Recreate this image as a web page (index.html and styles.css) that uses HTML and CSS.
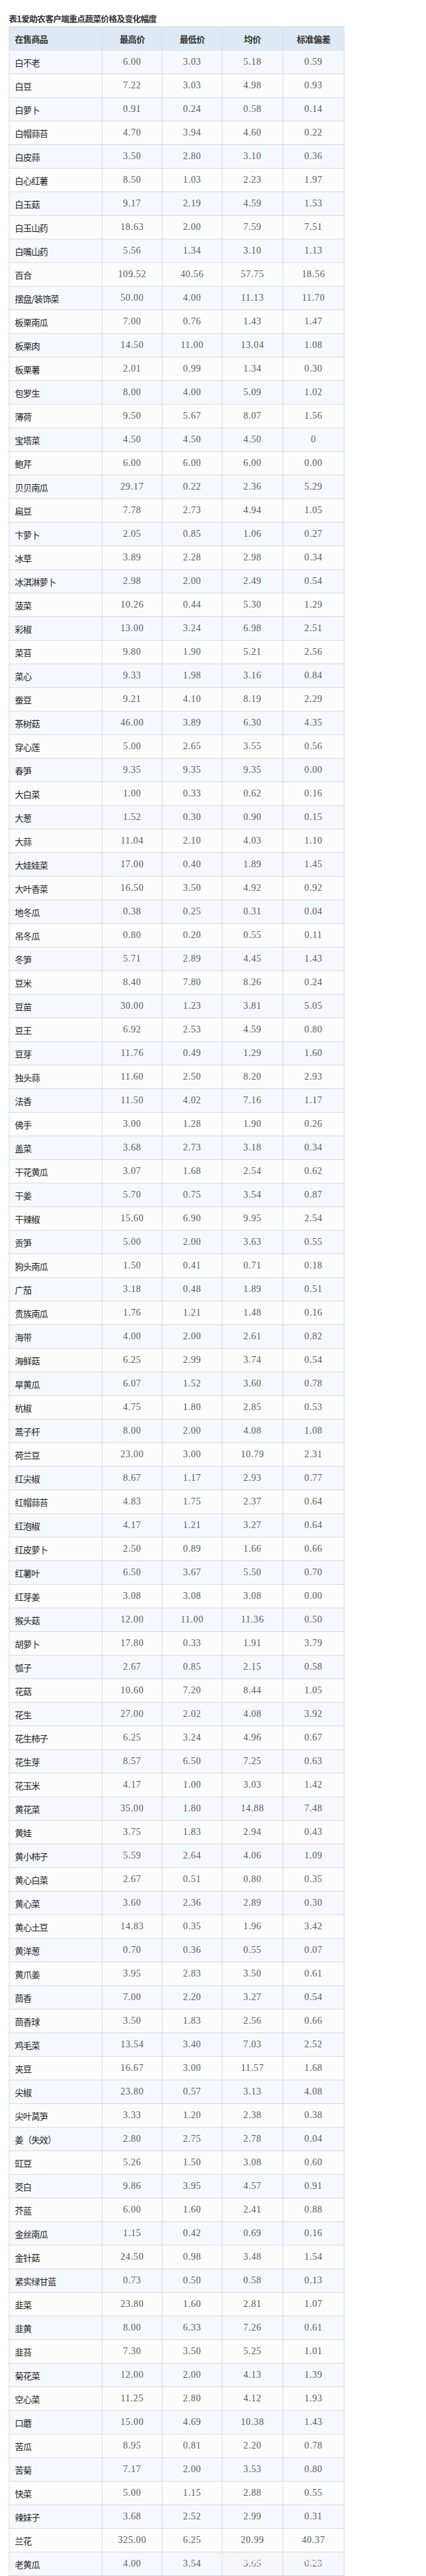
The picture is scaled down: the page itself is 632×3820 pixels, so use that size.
FILE: index.html
```html
<!DOCTYPE html>
<html lang="zh-CN">
<head>
<meta charset="utf-8">
<title>表1爱助农客户端重点蔬菜价格及变化幅度</title>
<link rel="stylesheet" href="styles.css">
</head>
<body>
<div class="page">
  <h3 class="caption">表1爱助农客户端重点蔬菜价格及变化幅度</h3>
  <table class="price-table">
    <colgroup>
      <col class="c-name"><col class="c-num"><col class="c-num"><col class="c-num2"><col class="c-num3">
    </colgroup>
    <thead>
      <tr><th class="name">在售商品</th><th>最高价</th><th>最低价</th><th>均价</th><th>标准偏差</th></tr>
    </thead>
    <tbody>
      <tr><td class="name">白不老</td><td>6.00</td><td>3.03</td><td>5.18</td><td>0.59</td></tr>
      <tr><td class="name">白豆</td><td>7.22</td><td>3.03</td><td>4.98</td><td>0.93</td></tr>
      <tr><td class="name">白萝卜</td><td>0.91</td><td>0.24</td><td>0.58</td><td>0.14</td></tr>
      <tr><td class="name">白帽蒜苔</td><td>4.70</td><td>3.94</td><td>4.60</td><td>0.22</td></tr>
      <tr><td class="name">白皮蒜</td><td>3.50</td><td>2.80</td><td>3.10</td><td>0.36</td></tr>
      <tr><td class="name">白心红薯</td><td>8.50</td><td>1.03</td><td>2.23</td><td>1.97</td></tr>
      <tr><td class="name">白玉菇</td><td>9.17</td><td>2.19</td><td>4.59</td><td>1.53</td></tr>
      <tr><td class="name">白玉山药</td><td>18.63</td><td>2.00</td><td>7.59</td><td>7.51</td></tr>
      <tr><td class="name">白嘴山药</td><td>5.56</td><td>1.34</td><td>3.10</td><td>1.13</td></tr>
      <tr><td class="name">百合</td><td>109.52</td><td>40.56</td><td>57.75</td><td>18.56</td></tr>
      <tr><td class="name">摆盘/装饰菜</td><td>50.00</td><td>4.00</td><td>11.13</td><td>11.70</td></tr>
      <tr><td class="name">板栗南瓜</td><td>7.00</td><td>0.76</td><td>1.43</td><td>1.47</td></tr>
      <tr><td class="name">板栗肉</td><td>14.50</td><td>11.00</td><td>13.04</td><td>1.08</td></tr>
      <tr><td class="name">板栗薯</td><td>2.01</td><td>0.99</td><td>1.34</td><td>0.30</td></tr>
      <tr><td class="name">包罗生</td><td>8.00</td><td>4.00</td><td>5.09</td><td>1.02</td></tr>
      <tr><td class="name">薄荷</td><td>9.50</td><td>5.67</td><td>8.07</td><td>1.56</td></tr>
      <tr><td class="name">宝塔菜</td><td>4.50</td><td>4.50</td><td>4.50</td><td>0</td></tr>
      <tr><td class="name">鲍芹</td><td>6.00</td><td>6.00</td><td>6.00</td><td>0.00</td></tr>
      <tr><td class="name">贝贝南瓜</td><td>29.17</td><td>0.22</td><td>2.36</td><td>5.29</td></tr>
      <tr><td class="name">扁豆</td><td>7.78</td><td>2.73</td><td>4.94</td><td>1.05</td></tr>
      <tr><td class="name">卞萝卜</td><td>2.05</td><td>0.85</td><td>1.06</td><td>0.27</td></tr>
      <tr><td class="name">冰草</td><td>3.89</td><td>2.28</td><td>2.98</td><td>0.34</td></tr>
      <tr><td class="name">冰淇淋萝卜</td><td>2.98</td><td>2.00</td><td>2.49</td><td>0.54</td></tr>
      <tr><td class="name">菠菜</td><td>10.26</td><td>0.44</td><td>5.30</td><td>1.29</td></tr>
      <tr><td class="name">彩椒</td><td>13.00</td><td>3.24</td><td>6.98</td><td>2.51</td></tr>
      <tr><td class="name">菜苔</td><td>9.80</td><td>1.90</td><td>5.21</td><td>2.56</td></tr>
      <tr><td class="name">菜心</td><td>9.33</td><td>1.98</td><td>3.16</td><td>0.84</td></tr>
      <tr><td class="name">蚕豆</td><td>9.21</td><td>4.10</td><td>8.19</td><td>2.29</td></tr>
      <tr><td class="name">茶树菇</td><td>46.00</td><td>3.89</td><td>6.30</td><td>4.35</td></tr>
      <tr><td class="name">穿心莲</td><td>5.00</td><td>2.65</td><td>3.55</td><td>0.56</td></tr>
      <tr><td class="name">春笋</td><td>9.35</td><td>9.35</td><td>9.35</td><td>0.00</td></tr>
      <tr><td class="name">大白菜</td><td>1.00</td><td>0.33</td><td>0.62</td><td>0.16</td></tr>
      <tr><td class="name">大葱</td><td>1.52</td><td>0.30</td><td>0.90</td><td>0.15</td></tr>
      <tr><td class="name">大蒜</td><td>11.04</td><td>2.10</td><td>4.03</td><td>1.10</td></tr>
      <tr><td class="name">大娃娃菜</td><td>17.00</td><td>0.40</td><td>1.89</td><td>1.45</td></tr>
      <tr><td class="name">大叶香菜</td><td>16.50</td><td>3.50</td><td>4.92</td><td>0.92</td></tr>
      <tr><td class="name">地冬瓜</td><td>0.38</td><td>0.25</td><td>0.31</td><td>0.04</td></tr>
      <tr><td class="name">吊冬瓜</td><td>0.80</td><td>0.20</td><td>0.55</td><td>0.11</td></tr>
      <tr><td class="name">冬笋</td><td>5.71</td><td>2.89</td><td>4.45</td><td>1.43</td></tr>
      <tr><td class="name">豆米</td><td>8.40</td><td>7.80</td><td>8.26</td><td>0.24</td></tr>
      <tr><td class="name">豆苗</td><td>30.00</td><td>1.23</td><td>3.81</td><td>5.05</td></tr>
      <tr><td class="name">豆王</td><td>6.92</td><td>2.53</td><td>4.59</td><td>0.80</td></tr>
      <tr><td class="name">豆芽</td><td>11.76</td><td>0.49</td><td>1.29</td><td>1.60</td></tr>
      <tr><td class="name">独头蒜</td><td>11.60</td><td>2.50</td><td>8.20</td><td>2.93</td></tr>
      <tr><td class="name">法香</td><td>11.50</td><td>4.02</td><td>7.16</td><td>1.17</td></tr>
      <tr><td class="name">佛手</td><td>3.00</td><td>1.28</td><td>1.90</td><td>0.26</td></tr>
      <tr><td class="name">盖菜</td><td>3.68</td><td>2.73</td><td>3.18</td><td>0.34</td></tr>
      <tr><td class="name">干花黄瓜</td><td>3.07</td><td>1.68</td><td>2.54</td><td>0.62</td></tr>
      <tr><td class="name">干姜</td><td>5.70</td><td>0.75</td><td>3.54</td><td>0.87</td></tr>
      <tr><td class="name">干辣椒</td><td>15.60</td><td>6.90</td><td>9.95</td><td>2.54</td></tr>
      <tr><td class="name">贡笋</td><td>5.00</td><td>2.00</td><td>3.63</td><td>0.55</td></tr>
      <tr><td class="name">狗头南瓜</td><td>1.50</td><td>0.41</td><td>0.71</td><td>0.18</td></tr>
      <tr><td class="name">广茄</td><td>3.18</td><td>0.48</td><td>1.89</td><td>0.51</td></tr>
      <tr><td class="name">贵族南瓜</td><td>1.76</td><td>1.21</td><td>1.48</td><td>0.16</td></tr>
      <tr><td class="name">海带</td><td>4.00</td><td>2.00</td><td>2.61</td><td>0.82</td></tr>
      <tr><td class="name">海鲜菇</td><td>6.25</td><td>2.99</td><td>3.74</td><td>0.54</td></tr>
      <tr><td class="name">旱黄瓜</td><td>6.07</td><td>1.52</td><td>3.60</td><td>0.78</td></tr>
      <tr><td class="name">杭椒</td><td>4.75</td><td>1.80</td><td>2.85</td><td>0.53</td></tr>
      <tr><td class="name">蒿子杆</td><td>8.00</td><td>2.00</td><td>4.08</td><td>1.08</td></tr>
      <tr><td class="name">荷兰豆</td><td>23.00</td><td>3.00</td><td>10.79</td><td>2.31</td></tr>
      <tr><td class="name">红尖椒</td><td>8.67</td><td>1.17</td><td>2.93</td><td>0.77</td></tr>
      <tr><td class="name">红帽蒜苔</td><td>4.83</td><td>1.75</td><td>2.37</td><td>0.64</td></tr>
      <tr><td class="name">红泡椒</td><td>4.17</td><td>1.21</td><td>3.27</td><td>0.64</td></tr>
      <tr><td class="name">红皮萝卜</td><td>2.50</td><td>0.89</td><td>1.66</td><td>0.66</td></tr>
      <tr><td class="name">红薯叶</td><td>6.50</td><td>3.67</td><td>5.50</td><td>0.70</td></tr>
      <tr><td class="name">红芽姜</td><td>3.08</td><td>3.08</td><td>3.08</td><td>0.00</td></tr>
      <tr><td class="name">猴头菇</td><td>12.00</td><td>11.00</td><td>11.36</td><td>0.50</td></tr>
      <tr><td class="name">胡萝卜</td><td>17.80</td><td>0.33</td><td>1.91</td><td>3.79</td></tr>
      <tr><td class="name">瓠子</td><td>2.67</td><td>0.85</td><td>2.15</td><td>0.58</td></tr>
      <tr><td class="name">花菇</td><td>10.60</td><td>7.20</td><td>8.44</td><td>1.05</td></tr>
      <tr><td class="name">花生</td><td>27.00</td><td>2.02</td><td>4.08</td><td>3.92</td></tr>
      <tr><td class="name">花生柿子</td><td>6.25</td><td>3.24</td><td>4.96</td><td>0.67</td></tr>
      <tr><td class="name">花生芽</td><td>8.57</td><td>6.50</td><td>7.25</td><td>0.63</td></tr>
      <tr><td class="name">花玉米</td><td>4.17</td><td>1.00</td><td>3.03</td><td>1.42</td></tr>
      <tr><td class="name">黄花菜</td><td>35.00</td><td>1.80</td><td>14.88</td><td>7.48</td></tr>
      <tr><td class="name">黄娃</td><td>3.75</td><td>1.83</td><td>2.94</td><td>0.43</td></tr>
      <tr><td class="name">黄小柿子</td><td>5.59</td><td>2.64</td><td>4.06</td><td>1.09</td></tr>
      <tr><td class="name">黄心白菜</td><td>2.67</td><td>0.51</td><td>0.80</td><td>0.35</td></tr>
      <tr><td class="name">黄心菜</td><td>3.60</td><td>2.36</td><td>2.89</td><td>0.30</td></tr>
      <tr><td class="name">黄心土豆</td><td>14.83</td><td>0.35</td><td>1.96</td><td>3.42</td></tr>
      <tr><td class="name">黄洋葱</td><td>0.70</td><td>0.36</td><td>0.55</td><td>0.07</td></tr>
      <tr><td class="name">黄爪姜</td><td>3.95</td><td>2.83</td><td>3.50</td><td>0.61</td></tr>
      <tr><td class="name">茴香</td><td>7.00</td><td>2.20</td><td>3.27</td><td>0.54</td></tr>
      <tr><td class="name">茴香球</td><td>3.50</td><td>1.83</td><td>2.56</td><td>0.66</td></tr>
      <tr><td class="name">鸡毛菜</td><td>13.54</td><td>3.40</td><td>7.03</td><td>2.52</td></tr>
      <tr><td class="name">夹豆</td><td>16.67</td><td>3.00</td><td>11.57</td><td>1.68</td></tr>
      <tr><td class="name">尖椒</td><td>23.80</td><td>0.57</td><td>3.13</td><td>4.08</td></tr>
      <tr><td class="name">尖叶莴笋</td><td>3.33</td><td>1.20</td><td>2.38</td><td>0.38</td></tr>
      <tr><td class="name">姜（失效）</td><td>2.80</td><td>2.75</td><td>2.78</td><td>0.04</td></tr>
      <tr><td class="name">豇豆</td><td>5.26</td><td>1.50</td><td>3.08</td><td>0.60</td></tr>
      <tr><td class="name">茭白</td><td>9.86</td><td>3.95</td><td>4.57</td><td>0.91</td></tr>
      <tr><td class="name">芥蓝</td><td>6.00</td><td>1.60</td><td>2.41</td><td>0.88</td></tr>
      <tr><td class="name">金丝南瓜</td><td>1.15</td><td>0.42</td><td>0.69</td><td>0.16</td></tr>
      <tr><td class="name">金针菇</td><td>24.50</td><td>0.98</td><td>3.48</td><td>1.54</td></tr>
      <tr><td class="name">紧实绿甘蓝</td><td>0.73</td><td>0.50</td><td>0.58</td><td>0.13</td></tr>
      <tr><td class="name">韭菜</td><td>23.80</td><td>1.60</td><td>2.81</td><td>1.07</td></tr>
      <tr><td class="name">韭黄</td><td>8.00</td><td>6.33</td><td>7.26</td><td>0.61</td></tr>
      <tr><td class="name">韭苔</td><td>7.30</td><td>3.50</td><td>5.25</td><td>1.01</td></tr>
      <tr><td class="name">菊花菜</td><td>12.00</td><td>2.00</td><td>4.13</td><td>1.39</td></tr>
      <tr><td class="name">空心菜</td><td>11.25</td><td>2.80</td><td>4.12</td><td>1.93</td></tr>
      <tr><td class="name">口蘑</td><td>15.00</td><td>4.69</td><td>10.38</td><td>1.43</td></tr>
      <tr><td class="name">苦瓜</td><td>8.95</td><td>0.81</td><td>2.20</td><td>0.78</td></tr>
      <tr><td class="name">苦菊</td><td>7.17</td><td>2.00</td><td>3.53</td><td>0.80</td></tr>
      <tr><td class="name">快菜</td><td>5.00</td><td>1.15</td><td>2.88</td><td>0.55</td></tr>
      <tr><td class="name">辣妹子</td><td>3.68</td><td>2.52</td><td>2.99</td><td>0.31</td></tr>
      <tr><td class="name">兰花</td><td>325.00</td><td>6.25</td><td>20.99</td><td>40.37</td></tr>
      <tr><td class="name">老黄瓜</td><td>4.00</td><td>3.54</td><td>3.65</td><td>0.23</td></tr>
    </tbody>
  </table>
  <div class="watermark">构站网(www.goz.cn)</div>
</div>
</body>
</html>
```
FILE: styles.css
```css
html, body {
  margin: 0;
  padding: 0;
  background: #ffffff;
}

.page {
  position: relative;
  padding: 19px 0 0 13px;
  width: 498px;
}

.caption {
  margin: 0 0 2px 0;
  height: 18px;
  line-height: 18px;
  font-family: "Noto Sans CJK SC", "Noto Sans", sans-serif;
  font-size: 12.5px;
  font-weight: 700;
  letter-spacing: -0.7px;
  color: #333333;
}

.price-table {
  border-collapse: collapse;
  table-layout: fixed;
  width: 498px;
  border: 1px solid #d3d8de;
}

.c-name { width: 138px; }
.c-num { width: 89px; }
.c-num2 { width: 90px; }
.c-num3 { width: 91px; }

.price-table tr {
  height: 35px;
}

.price-table th,
.price-table td {
  border: 1px solid #d9dde2;
  padding: 0;
  text-align: center;
  vertical-align: middle;
  white-space: nowrap;
  overflow: hidden;
}

.price-table th {
  background: #dde9f5;
  font-family: "Noto Sans CJK SC", sans-serif;
  font-size: 13px;
  font-weight: 700;
  letter-spacing: -0.6px;
  color: #333333;
}

.price-table td {
  font-family: "Liberation Serif", "Noto Sans CJK SC", serif;
  font-size: 14px;
  letter-spacing: 0.6px;
  color: #5a5a5a;
}

.price-table .name {
  text-align: left;
  padding-left: 8px;
  font-family: "Noto Sans CJK SC", sans-serif;
  font-size: 13px;
  font-weight: 400;
  letter-spacing: -0.8px;
  color: #222222;
}

.price-table th.name {
  font-weight: 700;
  color: #333333;
}

.price-table tbody tr:nth-child(odd) td {
  background: #f5f9fe;
}

.price-table tbody tr:nth-child(even) td {
  background: #fcfcfc;
}

.watermark {
  position: absolute;
  left: 323px;
  top: 3780px;
  font-family: "Noto Sans CJK SC", sans-serif;
  font-size: 19px;
  font-weight: 700;
  color: rgba(255, 255, 255, 0.75);
  text-shadow: 0 0 1px rgba(200, 200, 200, 0.35);
  white-space: nowrap;
  pointer-events: none;
}
```
